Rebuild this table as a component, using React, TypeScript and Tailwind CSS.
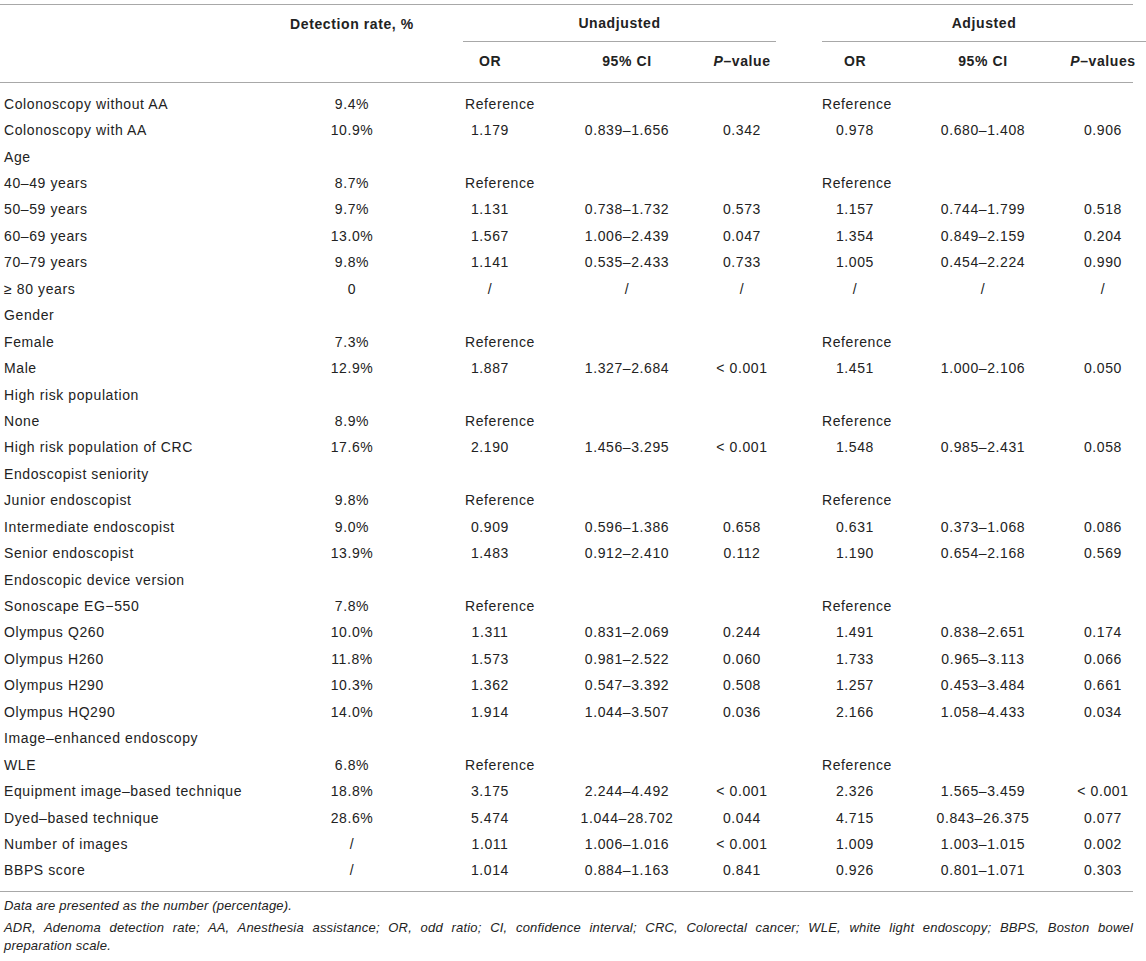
type Row = string[]

const ROWS: Row[] = [
  ['Colonoscopy without AA', '9.4%', 'REF'],
  ['Colonoscopy with AA', '10.9%', '1.179', '0.839–1.656', '0.342', '0.978', '0.680–1.408', '0.906'],
  ['Age'],
  ['40–49 years', '8.7%', 'REF'],
  ['50–59 years', '9.7%', '1.131', '0.738–1.732', '0.573', '1.157', '0.744–1.799', '0.518'],
  ['60–69 years', '13.0%', '1.567', '1.006–2.439', '0.047', '1.354', '0.849–2.159', '0.204'],
  ['70–79 years', '9.8%', '1.141', '0.535–2.433', '0.733', '1.005', '0.454–2.224', '0.990'],
  ['≥ 80 years', '0', '/', '/', '/', '/', '/', '/'],
  ['Gender'],
  ['Female', '7.3%', 'REF'],
  ['Male', '12.9%', '1.887', '1.327–2.684', '< 0.001', '1.451', '1.000–2.106', '0.050'],
  ['High risk population'],
  ['None', '8.9%', 'REF'],
  ['High risk population of CRC', '17.6%', '2.190', '1.456–3.295', '< 0.001', '1.548', '0.985–2.431', '0.058'],
  ['Endoscopist seniority'],
  ['Junior endoscopist', '9.8%', 'REF'],
  ['Intermediate endoscopist', '9.0%', '0.909', '0.596–1.386', '0.658', '0.631', '0.373–1.068', '0.086'],
  ['Senior endoscopist', '13.9%', '1.483', '0.912–2.410', '0.112', '1.190', '0.654–2.168', '0.569'],
  ['Endoscopic device version'],
  ['Sonoscape EG−550', '7.8%', 'REF'],
  ['Olympus Q260', '10.0%', '1.311', '0.831–2.069', '0.244', '1.491', '0.838–2.651', '0.174'],
  ['Olympus H260', '11.8%', '1.573', '0.981–2.522', '0.060', '1.733', '0.965–3.113', '0.066'],
  ['Olympus H290', '10.3%', '1.362', '0.547–3.392', '0.508', '1.257', '0.453–3.484', '0.661'],
  ['Olympus HQ290', '14.0%', '1.914', '1.044–3.507', '0.036', '2.166', '1.058–4.433', '0.034'],
  ['Image–enhanced endoscopy'],
  ['WLE', '6.8%', 'REF'],
  ['Equipment image–based technique', '18.8%', '3.175', '2.244–4.492', '< 0.001', '2.326', '1.565–3.459', '< 0.001'],
  ['Dyed–based technique', '28.6%', '5.474', '1.044–28.702', '0.044', '4.715', '0.843–26.375', '0.077'],
  ['Number of images', '/', '1.011', '1.006–1.016', '< 0.001', '1.009', '1.003–1.015', '0.002'],
  ['BBPS score', '/', '1.014', '0.884–1.163', '0.841', '0.926', '0.801–1.071', '0.303'],
]

// column widths chosen so each value sits on the reference's centre line
const GRID = 'grid grid-cols-[283px_138px_138px_136px_94px_132px_124px_101px]'

function DataRow({ row }: { row: Row }) {
  const [label, det, ...rest] = row
  if (row.length === 1) {
    return (
      <div className={`${GRID} h-[26.45px] items-center`}>
        <div className="pl-[4px] whitespace-nowrap">{label}</div>
      </div>
    )
  }
  if (rest[0] === 'REF') {
    return (
      <div className={`${GRID} h-[26.45px] items-center`}>
        <div className="pl-[4px] whitespace-nowrap">{label}</div>
        <div className="text-center">{det}</div>
        <div className="col-span-3 pl-[44px] whitespace-nowrap">Reference</div>
        <div className="col-span-3 pl-[33px] whitespace-nowrap">Reference</div>
      </div>
    )
  }
  return (
    <div className={`${GRID} h-[26.45px] items-center`}>
      <div className="pl-[4px] whitespace-nowrap">{label}</div>
      <div className="text-center">{det}</div>
      {rest.map((v, i) => (
        <div key={i} className={`text-center whitespace-nowrap ${i === 5 ? 'pl-[15px]' : ''}`}>
          {v}
        </div>
      ))}
    </div>
  )
}

export default function App() {
  return (
    <div className="w-[1146px] bg-white pt-[4px] font-['Liberation_Sans',Arial,sans-serif] text-[14px] tracking-[0.6px] text-[#222]">
      <div className="mr-[13px] border-t border-[#a8a8a8]">
        {/* header line 1 */}
        <div className={`${GRID} h-[37px] font-bold`}>
          <div />
          <div className="flex items-center justify-center whitespace-nowrap pt-[2px]">Detection rate, %</div>
          <div className="col-span-3 ml-[42px] mr-[13px] flex items-center justify-center border-b border-[#a8a8a8] pt-[1px]">
            Unadjusted
          </div>
          <div className="col-span-3 ml-[33px] flex items-center justify-center border-b border-[#a8a8a8] pt-[1px]">
            Adjusted
          </div>
        </div>
        {/* header line 2 */}
        <div className={`${GRID} h-[41px] items-center border-b border-[#a8a8a8] pb-[2px] font-bold`}>
          <div />
          <div />
          <div className="text-center">OR</div>
          <div className="text-center">95% CI</div>
          <div className="text-center whitespace-nowrap"><i>P</i>–value</div>
          <div className="text-center">OR</div>
          <div className="text-center">95% CI</div>
          <div className="pl-[15px] text-center whitespace-nowrap"><i>P</i>–values</div>
        </div>
        <div className="border-b border-[#a8a8a8] pt-[8px] pb-[7px]">
          {ROWS.map((r, i) => (
            <DataRow key={i} row={r} />
          ))}
        </div>
      </div>
      <div className="mr-[13px] pl-[4px] pt-[5px] text-[13px] italic leading-[18px] tracking-[0.2px]">
        <p>Data are presented as the number (percentage).</p>
        <p className="mt-[4px] [text-align-last:justify] text-justify">
          ADR, Adenoma detection rate; AA, Anesthesia assistance; OR, odd ratio; CI, confidence interval; CRC, Colorectal cancer; WLE, white light endoscopy; BBPS, Boston bowel
        </p>
        <p>preparation scale.</p>
      </div>
    </div>
  )
}
